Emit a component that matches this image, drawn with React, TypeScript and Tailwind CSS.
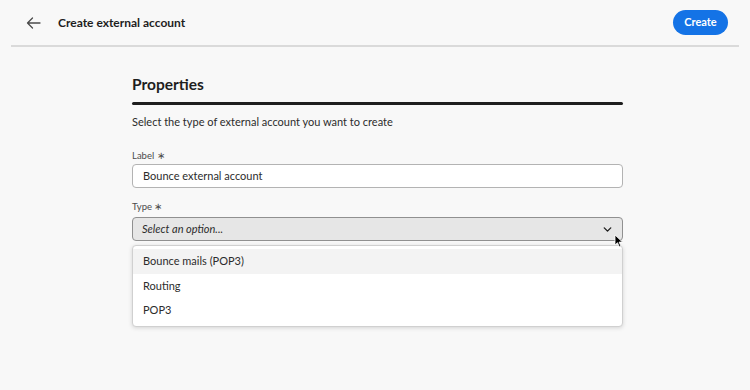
import { ChevronDown } from 'lucide-react';

const options = ['Bounce mails (POP3)', 'Routing', 'POP3'];

export default function App() {
  return (
    <div className="w-[750px] h-[390px] bg-[#f8f8f8] text-[#2c2c2c] font-['Lato',sans-serif] overflow-hidden">
      {/* Header */}
      <header className="flex items-center justify-between h-[45px] pl-[26px] pr-[22px]">
        <div className="flex items-center">
          <svg width="15" height="12" viewBox="0 0 15 12" fill="none" stroke="#4b4b4b" strokeWidth="1.3" strokeLinecap="round" strokeLinejoin="round">
            <path d="M14 6H1.5M6.5 1L1.5 6l5 5" />
          </svg>
          <h1 className="ml-[17px] text-[12px] font-bold text-[#1e1e1e]">Create external account</h1>
        </div>
        <button className="h-[25px] w-[55px] rounded-full bg-[#1473e6] text-white text-[11px] font-bold">
          Create
        </button>
      </header>
      <div className="mx-[11px] h-[2px] bg-[#dadada]" />

      {/* Form */}
      <main className="w-[491px] ml-[132px] pt-[26px]">
        <h2 className="text-[15.5px] font-bold text-[#1e1e1e] leading-[22px]">Properties</h2>
        <div className="mt-[7px] h-[3px] bg-[#1e1e1e] rounded-sm" />
        <p className="mt-[9px] text-[11px] text-[#2c2c2c]">Select the type of external account you want to create</p>

        <label className="block mt-[18px] text-[9.5px] text-[#4b4b4b]">Label ∗</label>
        <div className="mt-[1px] h-[24px] flex items-center px-[10px] bg-white border border-[#b3b3b3] rounded-[4px] text-[11px]">
          Bounce external account
        </div>

        <label className="block mt-[12px] text-[9.5px] text-[#4b4b4b]">Type ∗</label>
        <div className="relative mt-[3px]">
          <div className="h-[24px] flex items-center justify-between pl-[9px] pr-[8px] bg-[#e6e6e6] border border-[#909090] rounded-[4px] text-[11px] italic">
            <span>Select an option...</span>
            <ChevronDown size={13} strokeWidth={2.5} className="text-[#1e1e1e]" />
          </div>
          <svg className="absolute right-[-1px] top-[17px]" width="10" height="14" viewBox="0 0 10 14">
            <path d="M1 1v10l2.5-2.3 1.8 4.1 1.6-.7-1.8-4H8.5z" fill="#000" stroke="#fff" strokeWidth="0.8" />
          </svg>
        </div>

        <ul className="mt-[4px] py-[3px] bg-white border border-[#d0d0d0] rounded-[4px] shadow-[0_1px_4px_rgba(0,0,0,0.15)]">
          {options.map((o, i) => (
            <li key={o} className={`h-[24.5px] flex items-center px-[10px] text-[11px] ${i === 0 ? 'bg-[#f3f3f3]' : ''}`}>
              {o}
            </li>
          ))}
        </ul>
      </main>
    </div>
  );
}
